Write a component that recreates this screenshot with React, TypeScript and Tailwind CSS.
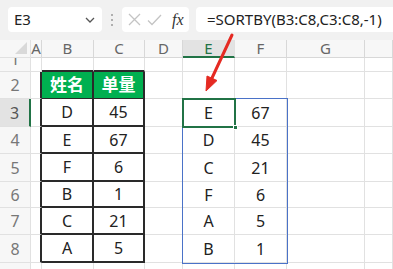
import React from 'react';

const COLS = ['', 'A', 'B', 'C', 'D', 'E', 'F', 'G', ''];
const ROW_H = ['h-[14px]', 'h-[27px]', 'h-[28px]', 'h-[27px]', 'h-[28px]', 'h-[26px]', 'h-[27px]', 'h-[28px]', 'h-[10px]'];

const left: [string, string][] = [
  ['D', '45'],
  ['E', '67'],
  ['F', '6'],
  ['B', '1'],
  ['C', '21'],
  ['A', '5'],
];
const sorted: [string, string][] = [
  ['E', '67'],
  ['D', '45'],
  ['C', '21'],
  ['F', '6'],
  ['A', '5'],
  ['B', '1'],
];

const font = { fontFamily: '"Noto Sans", "Noto Sans CJK SC", sans-serif' };

function Toolbar() {
  return (
    <div className="h-[40px] bg-[#f1f1f1] flex items-start pt-[7px] pl-[8px]">
      <div className="w-[94px] h-[25px] bg-white rounded-[4px] flex items-center justify-between pl-[6px] pr-[7px] text-[15px] text-[#222]">
        <span>E3</span>
        <svg width="10" height="6" viewBox="0 0 10 6" fill="none" stroke="#555" strokeWidth="1.3">
          <path d="M1 1l4 4 4-4" />
        </svg>
      </div>
      <div className="w-[20px] h-[25px] flex flex-col items-center justify-center gap-[3px]">
        <span className="w-[2px] h-[2px] bg-[#999] rounded-full" />
        <span className="w-[2px] h-[2px] bg-[#999] rounded-full" />
        <span className="w-[2px] h-[2px] bg-[#999] rounded-full" />
      </div>
      <div className="w-[67px] h-[25px] bg-white rounded-[4px] flex items-center pl-[6px] gap-[6px]">
        <svg width="13" height="13" viewBox="0 0 13 13" stroke="#c4c4c4" strokeWidth="1.3">
          <path d="M1 1l11 11M12 1L1 12" />
        </svg>
        <svg width="15" height="12" viewBox="0 0 15 12" fill="none" stroke="#c4c4c4" strokeWidth="1.3">
          <path d="M1 6.5l4 4L14 1" />
        </svg>
        <span
          className="ml-[4px] text-[16px] italic text-[#333]"
          style={{ fontFamily: '"Liberation Serif", serif' }}
        >
          fx
        </span>
      </div>
      <div className="ml-[7px] flex-1 h-[25px] bg-white rounded-l-[4px] flex items-center pl-[11px] text-[15px] text-[#222] whitespace-nowrap">
        =SORTBY(B3:C8,C3:C8,-1)
      </div>
    </div>
  );
}

function cellText(r: number, c: number): string {
  // r: sheet row number (1..9), c: column index in COLS
  if (r === 2 && c === 2) return '姓名';
  if (r === 2 && c === 3) return '单量';
  if (r >= 3 && r <= 8) {
    const i = r - 3;
    if (c === 2) return left[i][0];
    if (c === 3) return left[i][1];
    if (c === 5) return sorted[i][0];
    if (c === 6) return sorted[i][1];
  }
  return '';
}

function Cell({ r, c }: { r: number; c: number }) {
  const inTable = r >= 2 && r <= 8 && (c === 2 || c === 3);
  const leftOfTable = r >= 2 && r <= 8 && c === 1;
  const aboveTable = r === 1 && (c === 2 || c === 3);
  const header = r === 2 && inTable;

  let cls = 'flex items-center justify-center text-[16px] text-[#222] ';
  if (c === 0) {
    const sel = r === 3;
    cls += sel
      ? 'bg-[#e3e3e3] border-b border-b-[#e1e1e1] border-r-2 border-r-[#217346] text-[#555] '
      : 'bg-[#f7f7f7] border-b border-r border-[#e1e1e1] text-[#777] ';
    if (r === 1) cls += 'overflow-hidden items-start ';
    // row 1 is scrolled so only the foot of its number shows; row 9 is cut off
    return (
      <div className={cls}>
        {r === 1 && <span className="-mt-[10px] leading-[22px]">1</span>}
        {r > 1 && r < 9 && <span>{r}</span>}
      </div>
    );
  }

  if (inTable) cls += 'border-r-2 border-b-2 border-[#2a2a2a] ';
  else if (leftOfTable) cls += 'border-r-2 border-r-[#2a2a2a] border-b border-b-[#e1e1e1] ';
  else if (aboveTable) cls += 'border-r border-r-[#e1e1e1] border-b-2 border-b-[#2a2a2a] ';
  else cls += 'border-r border-b border-[#e1e1e1] ';
  if (header) cls += 'bg-[#00b050] text-white font-bold text-[17px] ';
  else cls += 'bg-white ';

  return <div className={cls}>{cellText(r, c)}</div>;
}

function Sheet() {
  const rows = [1, 2, 3, 4, 5, 6, 7, 8, 9];
  return (
    <div className="grid grid-cols-[31px_11px_52px_51px_38px_52px_52px_78px_1fr]">
      {COLS.map((name, c) => {
        if (c === 0) {
          return (
            <div key={c} className="h-[18px] bg-[#f7f7f7] border-b border-r border-[#e1e1e1] relative overflow-hidden">
              <div className="absolute right-[3px] bottom-[3px] w-0 h-0 border-l-[12px] border-l-transparent border-b-[12px] border-b-[#d9d9d9]" />
            </div>
          );
        }
        const sel = name === 'E';
        return (
          <div
            key={c}
            className={
              'h-[18px] flex items-center justify-center text-[15px] ' +
              (sel
                ? 'bg-[#e3e3e3] text-[#217346] border-r border-r-[#e1e1e1] border-b-2 border-b-[#217346]'
                : 'bg-[#f7f7f7] text-[#666] border-r border-b border-[#d8d8d8]')
            }
          >
            {name}
          </div>
        );
      })}
      {rows.map((r, ri) =>
        COLS.map((_, c) => (
          <div key={r + '-' + c} className={ROW_H[ri] + ' grid'}>
            <Cell r={r} c={c} />
          </div>
        ))
      )}
    </div>
  );
}

export default function App() {
  return (
    <div className="relative w-[393px] h-[269px] overflow-hidden bg-white" style={font}>
      <Toolbar />
      <Sheet />

      {/* result range */}
      <div className="absolute left-[182px] top-[98px] w-[106px] h-[166px] border border-[#4a72c8]" />
      {/* active cell */}
      <div className="absolute left-[182px] top-[98px] w-[54px] h-[30px] border-2 border-[#217346]" />
      <div className="absolute left-[233px] top-[125px] w-[5px] h-[5px] bg-[#217346] border border-white" />

      {/* arrow */}
      <svg className="absolute left-0 top-0" width="393" height="269" viewBox="0 0 393 269">
        <line x1="232" y1="35" x2="212" y2="78" stroke="#e52a22" strokeWidth="3" strokeLinecap="round" />
        <path d="M206 91 L217 80.5 L207 76 Z" fill="#e52a22" stroke="#e52a22" strokeWidth="1" strokeLinejoin="round" />
      </svg>
    </div>
  );
}
